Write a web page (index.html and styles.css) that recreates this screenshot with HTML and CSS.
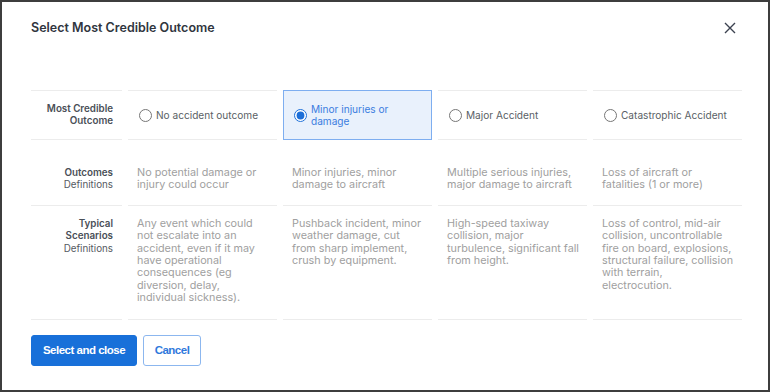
FILE: index.html
```html
<!DOCTYPE html>
<html lang="en">
<head>
    <meta charset="UTF-8">
    <meta name="viewport" content="width=device-width, initial-scale=1.0">
    <title>Select Most Credible Outcome</title>
    <link rel="stylesheet" href="styles.css">
</head>
<body>
    <div class="dialog">
        <div class="dialog-header">
            <h2>Select Most Credible Outcome</h2>
            <button class="close" aria-label="Close">
                <svg width="12" height="12" viewBox="0 0 12 12"><path d="M1 1 L11 11 M11 1 L1 11" stroke="#3c4250" stroke-width="1.4" fill="none"/></svg>
            </button>
        </div>
        <div class="outcomes">
            <div class="label row-choice"><b>Most Credible Outcome</b></div>
            <label class="cell row-choice option"><input type="radio" name="outcome"><span>No accident outcome</span></label>
            <label class="cell row-choice option selected"><input type="radio" name="outcome" checked><span>Minor injuries or damage</span></label>
            <label class="cell row-choice option"><input type="radio" name="outcome"><span>Major Accident</span></label>
            <label class="cell row-choice option"><input type="radio" name="outcome"><span>Catastrophic Accident</span></label>

            <div class="label row-def"><b>Outcomes</b><br>Definitions</div>
            <div class="cell row-def">No potential damage or injury could occur</div>
            <div class="cell row-def">Minor injuries, minor damage to aircraft</div>
            <div class="cell row-def">Multiple serious injuries, major damage to aircraft</div>
            <div class="cell row-def">Loss of aircraft or fatalities (1 or more)</div>

            <div class="label row-scen"><b>Typical Scenarios</b><br>Definitions</div>
            <div class="cell row-scen">Any event which could not escalate into an accident, even if it may have operational consequences (eg diversion, delay, individual sickness).</div>
            <div class="cell row-scen">Pushback incident, minor weather damage, cut from sharp implement, crush by equipment.</div>
            <div class="cell row-scen">High-speed taxiway collision, major turbulence, significant fall from height.</div>
            <div class="cell row-scen">Loss of control, mid-air collision, uncontrollable fire on board, explosions, structural failure, collision with terrain, electrocution.</div>
        </div>
        <div class="actions">
            <button class="btn btn-primary">Select and close</button>
            <button class="btn btn-outline">Cancel</button>
        </div>
    </div>
</body>
</html>
```

FILE: styles.css
```css
body {
    margin: 0;
    font-family: Inter, "Noto Sans", sans-serif;
    background: white;
}
.dialog {
    width: 770px;
    height: 392px;
    border: 2px solid #3d3d3d;
    background: white;
    padding: 0 0 0 29px;
    box-sizing: border-box;
}
.dialog-header {
    display: flex;
    justify-content: space-between;
    align-items: center;
    padding-top: 16px;
    padding-right: 32px;
    height: 20px;
}
.dialog-header h2 {
    margin: 0;
    font-size: 12.5px;
    font-weight: 600;
    color: #30353e;
    line-height: 20px;
}
.close {
    border: none;
    background: none;
    padding: 0;
    width: 12px;
    height: 12px;
    cursor: pointer;
    display: flex;
}
.outcomes {
    display: grid;
    grid-template-columns: 91px 149px 149px 149px 149px;
    column-gap: 6px;
    margin-top: 52px;
    font-size: 10.8px;
    line-height: 12.4px;
}
.label {
    text-align: right;
    font-size: 9.8px;
    color: #555a62;
    padding-right: 9px;
    border-bottom: 1px solid #ececec;
}
.label b {
    font-weight: 600;
    color: #4a4f57;
}
.cell {
    color: #a0a0a0;
    padding-left: 9px;
    padding-right: 7px;
    border-bottom: 1px solid #ececec;
}
.row-choice {
    border-top: 1px solid #ececec;
    box-sizing: border-box;
    height: 50px;
    display: flex;
    align-items: center;
    justify-content: flex-end;
}
.option {
    justify-content: flex-start;
    color: #5a5f66;
    font-size: 10.1px;
    gap: 4px;
    padding-left: 11px;
    cursor: pointer;
}
.option input {
    margin: 0;
    width: 13px;
    height: 13px;
    accent-color: #1d6fd8;
    flex: none;
}
.selected {
    border: 1px solid #7eaef0;
    background: #e9f1fc;
    color: #3b7de0;
    padding-left: 10px;
}
.row-def {
    padding-top: 27px;
    padding-bottom: 13px;
}
.row-scen {
    padding-top: 12px;
    padding-bottom: 14px;
}
.actions {
    display: flex;
    gap: 6px;
    margin-top: 15px;
}
.btn {
    height: 31px;
    border-radius: 3px;
    font-family: "Liberation Sans", Arial, sans-serif;
    font-size: 11.5px;
    font-weight: bold;
    letter-spacing: -0.5px;
    cursor: pointer;
}
.btn-primary {
    background-color: #1870d9;
    color: white;
    border: 1px solid #1870d9;
    width: 106px;
}
.btn-outline {
    background-color: white;
    color: #2f79dc;
    border: 1px solid #8cb7ef;
    width: 58px;
}
```
